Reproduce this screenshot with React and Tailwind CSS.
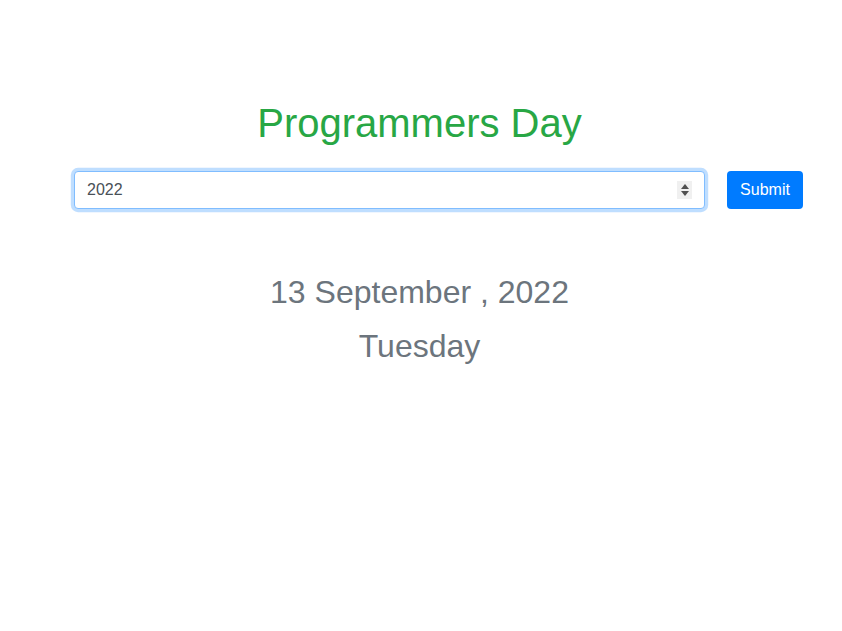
import React, { useState } from 'react';

const days = ['Sunday', 'Monday', 'Tuesday', 'Wednesday', 'Thursday', 'Friday', 'Saturday'];
const months = ['January', 'February', 'March', 'April', 'May', 'June', 'July', 'August', 'September', 'October', 'November', 'December'];

// 256th day of the year
const programmersDay = (year) => {
  const d = new Date(year, 0, 1);
  d.setDate(256);
  return d;
};

export default function App() {
  const [input, setInput] = useState('2022');
  const [year, setYear] = useState(2022);

  const date = programmersDay(year);

  const step = (n) => setInput(String((parseInt(input, 10) || 0) + n));

  return (
    <div className="w-full min-h-[631px] bg-white font-['Liberation_Sans',Arial,sans-serif] flex flex-col items-center pt-[99px] pr-[3px]">
      <h1 className="text-[40px] leading-[48px] text-[#28a745]">Programmers Day</h1>

      <div className="self-start ml-[74px] w-[729px] mt-[24px] flex items-center gap-[22px]">
        <div className="relative w-[631px]">
          <input
            type="text"
            value={input}
            onChange={(e) => setInput(e.target.value)}
            className="w-full h-[38px] px-3 text-base text-[#495057] bg-white border border-[#80bdff] rounded-[4px] outline-none shadow-[0_0_0_3.2px_rgba(0,123,255,0.25)]"
          />
          <div className="absolute right-[13px] top-[10px] w-[15px] h-[18px] bg-[#f0f0f0] flex flex-col">
            <button onClick={() => step(1)} className="h-[9px] flex items-end justify-center pb-[1px]">
              <svg width="8" height="5" viewBox="0 0 8 5"><path d="M0 5 L4 0 L8 5 Z" fill="#505050" /></svg>
            </button>
            <button onClick={() => step(-1)} className="h-[9px] flex items-start justify-center pt-[1px]">
              <svg width="8" height="5" viewBox="0 0 8 5"><path d="M0 0 L4 5 L8 0 Z" fill="#505050" /></svg>
            </button>
          </div>
        </div>
        <button
          onClick={() => setYear(parseInt(input, 10) || year)}
          className="h-[38px] w-[76px] text-base text-white bg-[#007bff] rounded-[4px]"
        >
          Submit
        </button>
      </div>

      <h2 className="mt-[64px] text-[32px] leading-[38px] text-[#6c757d]">
        {date.getDate()} {months[date.getMonth()]} , {year}
      </h2>
      <h2 className="mt-[16px] text-[32px] leading-[38px] text-[#6c757d]">{days[date.getDay()]}</h2>
    </div>
  );
}
